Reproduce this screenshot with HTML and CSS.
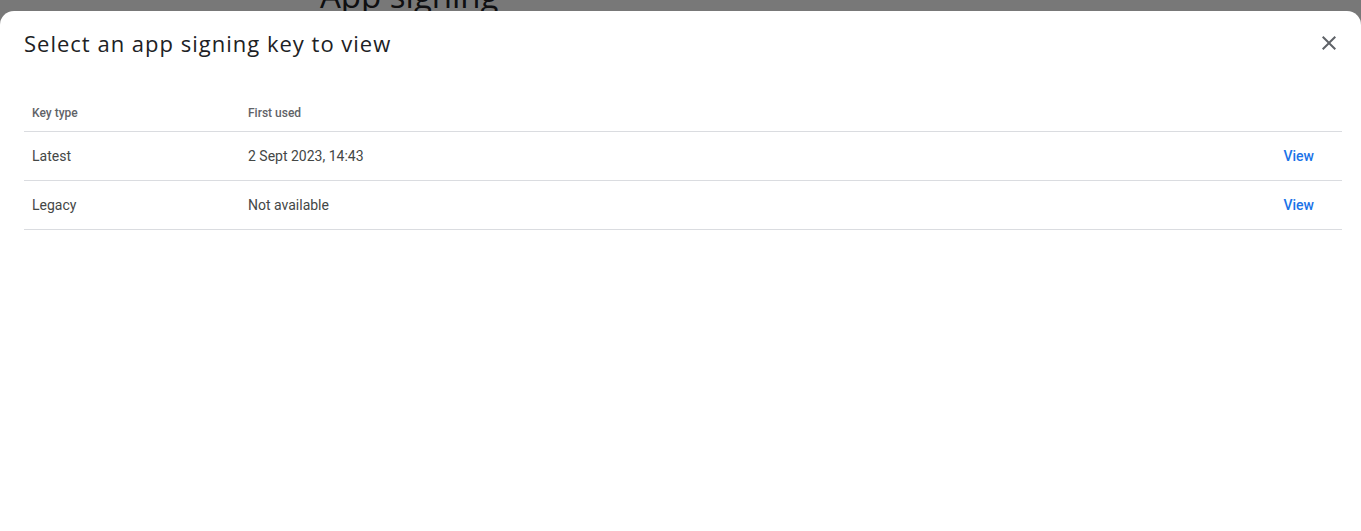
FILE: index.html
```html
<!DOCTYPE html>
<html lang="en">
<head>
    <meta charset="UTF-8">
    <meta name="viewport" content="width=device-width, initial-scale=1.0">
    <title>App signing</title>
    <link rel="stylesheet" href="styles.css">
</head>
<body>
    <div class="page">
        <h1 class="page-title">App signing</h1>
    </div>
    <div class="scrim"></div>
    <div class="dialog">
        <div class="dialog-header">
            <h2>Select an app signing key to view</h2>
            <button class="close-btn" aria-label="Close">
                <svg width="24" height="24" viewBox="0 0 24 24">
                    <path d="M19 6.41L17.59 5 12 10.59 6.41 5 5 6.41 10.59 12 5 17.59 6.41 19 12 13.41 17.59 19 19 17.59 13.41 12z" fill="#5f6368"/>
                </svg>
            </button>
        </div>
        <table class="key-table">
            <thead>
                <tr>
                    <th class="col-type">Key type</th>
                    <th>First used</th>
                    <th></th>
                </tr>
            </thead>
            <tbody>
                <tr>
                    <td>Latest</td>
                    <td>2 Sept 2023, 14:43</td>
                    <td class="action"><a href="#">View</a></td>
                </tr>
                <tr>
                    <td>Legacy</td>
                    <td>Not available</td>
                    <td class="action"><a href="#">View</a></td>
                </tr>
            </tbody>
        </table>
    </div>
</body>
</html>
```

FILE: styles.css
```css
body {
    margin: 0;
    padding: 0;
    font-family: Roboto, Arial, sans-serif;
    background-color: #fff;
    height: 531px;
    overflow: hidden;
}

.page {
    padding-left: 320px;
}

.page-title {
    margin: 0;
    margin-top: -27px;
    font-family: "Open Sans", Arial, sans-serif;
    font-size: 33px;
    font-weight: 400;
    color: #202124;
}

.scrim {
    position: absolute;
    top: 0;
    left: 0;
    right: 0;
    bottom: 0;
    background-color: rgba(0, 0, 0, 0.53);
}

.dialog {
    position: absolute;
    top: 11px;
    left: 0;
    right: 0;
    bottom: 0;
    background-color: #fff;
    border-radius: 14px 14px 0 0;
    padding: 0 19px 0 24px;
}

.dialog-header {
    display: flex;
    align-items: center;
    justify-content: space-between;
    height: 64px;
}

.dialog-header h2 {
    margin: 0;
    font-family: "Open Sans", Arial, sans-serif;
    font-size: 22px;
    font-weight: 400;
    color: #202124;
    letter-spacing: 1px;
}

.close-btn {
    background: none;
    border: none;
    padding: 0;
    width: 24px;
    height: 24px;
    margin-right: 1px;
    cursor: pointer;
}

.key-table {
    width: 1318px;
    border-collapse: collapse;
    margin-top: 12px;
}

.key-table th {
    text-align: left;
    vertical-align: bottom;
    font-size: 12px;
    font-weight: 500;
    color: #5f6368;
    height: 33px;
    padding: 0 8px 11px;
    border-bottom: 1px solid #dadce0;
}

.key-table th.col-type {
    width: 200px;
}

.key-table td {
    font-size: 14px;
    color: #444746;
    height: 47px;
    padding: 0 8px 1px;
    border-bottom: 1px solid #dadce0;
}

.key-table td.action {
    text-align: right;
    padding-right: 28px;
}

.key-table td.action a {
    color: #1a73e8;
    font-weight: 500;
    text-decoration: none;
}
```
